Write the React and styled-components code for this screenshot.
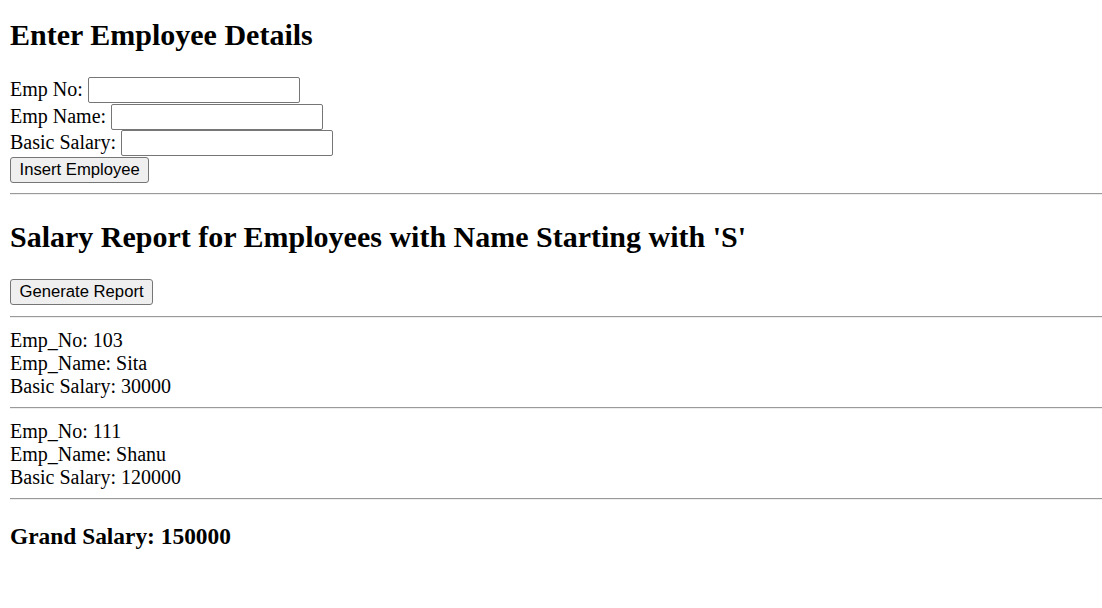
import React from "react";
import styled, { createGlobalStyle } from "styled-components";

const GlobalStyle = createGlobalStyle`
  html, body {
    margin: 0;
    padding: 0;
    background: #ffffff;
  }
  body {
    padding-left: 10px;
    color: #000000;
    font-family: "Liberation Serif", "Times New Roman", serif;
    font-size: 20px;
    line-height: 23px;
  }
`;

const Page = styled.div`
  display: flow-root;
`;

const Heading = styled.h2`
  margin: ${(p) => p.$top}px 0 ${(p) => p.$bottom}px;
  font-size: 30px;
  line-height: 34px;
  font-weight: bold;
`;

const Form = styled.form`
  display: flex;
  flex-direction: column;
  margin: 0;
`;

const Row = styled.div`
  display: flex;
  align-items: center;
  gap: 5px;
  height: 26.5px;
`;

const Label = styled.label`
  line-height: 23px;
  padding-bottom: 1px;
  white-space: nowrap;
`;

const TextInput = styled.input`
  box-sizing: border-box;
  width: 212px;
  height: 26px;
  margin: 0;
  padding: 1px 2px;
  border: 1px solid #767676;
  border-radius: 2px;
  background: #ffffff;
  font-family: "Liberation Sans", Arial, sans-serif;
  font-size: 16.67px;
`;

const Button = styled.button`
  box-sizing: border-box;
  height: 26px;
  margin: 0;
  padding: 0 8.5px;
  border: 1px solid #767676;
  border-radius: 3px;
  background: #efefef;
  color: #000000;
  font-family: "Liberation Sans", Arial, sans-serif;
  font-size: 16.67px;
  line-height: 20px;
  cursor: default;
`;

const ButtonRow = styled.div`
  display: flex;
  align-items: flex-start;
  height: 27px;
`;

const Rule = styled.hr`
  margin: 10px 0;
  height: 0;
  border: none;
  border-top: 1px solid #9a9a9a;
  border-bottom: 1px solid #eeeeee;
`;

const Record = styled.div`
  box-sizing: border-box;
  display: flex;
  flex-direction: column;
  height: 69px;
  padding-top: 1px;
`;

const Line = styled.div`
  line-height: 23px;
  white-space: nowrap;
`;

const Total = styled.h3`
  margin: 22.5px 0 0;
  font-size: 23.4px;
  line-height: 26px;
  font-weight: bold;
`;

const employees = [
  { no: 103, name: "Sita", salary: 30000 },
  { no: 111, name: "Shanu", salary: 120000 },
];

const fields = [
  { id: "empno", label: "Emp No:" },
  { id: "empname", label: "Emp Name:" },
  { id: "salary", label: "Basic Salary:" },
];

export default function App() {
  const total = employees.reduce((s, e) => s + e.salary, 0);
  return (
    <Page>
      <GlobalStyle />
      <Heading $top={18} $bottom={25}>Enter Employee Details</Heading>
      <Form onSubmit={(e) => e.preventDefault()}>
        {fields.map((f) => (
          <Row key={f.id}>
            <Label htmlFor={f.id}>{f.label}</Label>
            <TextInput id={f.id} type="text" />
          </Row>
        ))}
        <Row>
          <Button type="submit">Insert Employee</Button>
        </Row>
      </Form>
      <Rule />
      <Heading $top={25} $bottom={25}>
        Salary Report for Employees with Name Starting with 'S'
      </Heading>
      <ButtonRow>
        <Button type="button">Generate Report</Button>
      </ButtonRow>
      <Rule />
      {employees.map((e) => (
        <React.Fragment key={e.no}>
          <Record>
            <Line>Emp_No: {e.no}</Line>
            <Line>Emp_Name: {e.name}</Line>
            <Line>Basic Salary: {e.salary}</Line>
          </Record>
          <Rule />
        </React.Fragment>
      ))}
      <Total>Grand Salary: {total}</Total>
    </Page>
  );
}
